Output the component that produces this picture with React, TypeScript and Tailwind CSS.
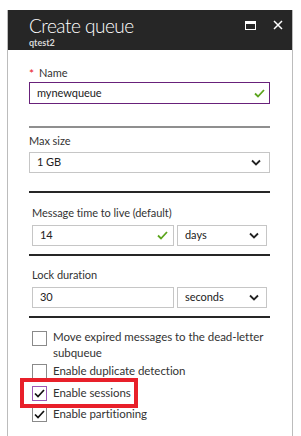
import React from 'react';

const font = { fontFamily: 'Lato, "Open Sans", Arial, sans-serif' };

function Chevron() {
    return (
        <svg width="10" height="7" viewBox="0 0 10 7" className="shrink-0">
            <polyline points="1,1.5 5,5.5 9,1.5" fill="none" stroke="#222" strokeWidth="1.8" />
        </svg>
    );
}

function GreenCheck() {
    return (
        <svg width="11" height="9" viewBox="0 0 11 9" className="shrink-0">
            <polyline points="1,4.5 4,7.5 10,1" fill="none" stroke="#5ca51d" strokeWidth="1.8" />
        </svg>
    );
}

function Box({ checked, focus }: { checked?: boolean; focus?: boolean }) {
    return (
        <div className={`w-[15px] h-[15px] shrink-0 border bg-white flex items-center justify-center ${focus ? 'border-[#9b59b6]' : 'border-[#8a8a8a]'}`}>
            {checked && (
                <svg width="11" height="9" viewBox="0 0 11 9">
                    <polyline points="1,4.5 4,7.5 10,1" fill="none" stroke="#111" strokeWidth="1.7" />
                </svg>
            )}
        </div>
    );
}

export default function App() {
    return (
        <div className="w-[301px] h-[436px] bg-white overflow-hidden pt-[10px] pl-[7px]" style={font}>
            <div className="w-[286px] h-[426px] border-x border-[#bcbcbc] relative">
                {/* Header */}
                <div className="h-[40px] bg-[#262626] flex items-start justify-between pl-[21px] pr-[9px]">
                    <div className="pt-[4px]">
                        <div className="text-[19px] leading-[23px] font-light tracking-[-0.5px] text-white">Create queue</div>
                        <div className="text-[9px] leading-[11px] text-[#d8d8d8] font-bold">qtest2</div>
                    </div>
                    <div className="flex items-center gap-[17px] pt-[10px]">
                        <div className="w-[11px] h-[9px] border-[1.5px] border-white border-t-[3px]"></div>
                        <svg width="10" height="10" viewBox="0 0 10 10">
                            <path d="M1 1 L9 9 M9 1 L1 9" stroke="white" strokeWidth="1.5" />
                        </svg>
                    </div>
                </div>

                {/* Body */}
                <div className="pl-[21px] pr-[22px] text-[11px] tracking-[-0.05px] text-[#333]">
                    <div className="pt-[15px] h-[32px] flex items-center">
                        <span className="text-[#e81123] mr-[5px] text-[12px]">*</span>
                        <span>Name</span>
                    </div>
                    <div className="h-[22px] border border-[#68217a] flex items-center justify-between pl-[7px] pr-[4px] text-[#222]">
                        <span>mynewqueue</span>
                        <GreenCheck />
                    </div>
                    <div className="mt-[22px] h-[2px] bg-[#8f8f8f]"></div>

                    <div className="h-[21px] mt-[3px] flex items-center">Max size</div>
                    <div className="h-[21px] border border-[#c6c6c6] flex items-center justify-between pl-[7px] pr-[8px] text-[#222]">
                        <span>1 GB</span>
                        <Chevron />
                    </div>
                    <div className="mt-[18px] h-[2px] bg-[#262626]"></div>

                    <div className="px-[3px]">
                        <div className="h-[23px] mt-[9px] flex items-center">Message time to live (default)</div>
                        <div className="flex gap-[3px]">
                            <div className="w-[142px] h-[21px] border border-[#c6c6c6] flex items-center justify-between pl-[7px] pr-[5px] text-[#222]">
                                <span>14</span>
                                <GreenCheck />
                            </div>
                            <div className="flex-1 h-[21px] border border-[#c6c6c6] flex items-center justify-between pl-[7px] pr-[7px] text-[#222]">
                                <span>days</span>
                                <Chevron />
                            </div>
                        </div>
                    </div>
                    <div className="mt-[8px] h-[2px] bg-[#262626]"></div>

                    <div className="px-[3px]">
                        <div className="h-[23px] mt-[8px] flex items-center">Lock duration</div>
                        <div className="flex gap-[3px]">
                            <div className="w-[142px] h-[21px] border border-[#c6c6c6] flex items-center pl-[7px] text-[#222]">
                                <span>30</span>
                            </div>
                            <div className="flex-1 h-[21px] border border-[#c6c6c6] flex items-center justify-between pl-[7px] pr-[7px] text-[#222]">
                                <span>seconds</span>
                                <Chevron />
                            </div>
                        </div>
                    </div>
                    <div className="mt-[8px] h-[2px] bg-[#262626]"></div>

                    {/* Checkboxes */}
                    <div className="pl-[3px] pt-[11px] flex flex-col leading-[16px] text-[11.5px]">
                        <div className="flex gap-[6px] items-start">
                            <div className="pt-[2px]"><Box /></div>
                            <span className="whitespace-nowrap">Move expired messages to the dead-letter<br />subqueue</span>
                        </div>
                        <div className="flex gap-[6px] items-center mt-[2px]">
                            <Box />
                            <span>Enable duplicate detection</span>
                        </div>
                        <div className="flex gap-[6px] items-center relative mt-[6px]">
                            <Box checked focus />
                            <span>Enable sessions</span>
                            <div className="absolute left-[-12px] top-[-7px] w-[118px] h-[30px] border-[4px] border-[#e8202a]"></div>
                        </div>
                        <div className="flex gap-[6px] items-center mt-[5px]">
                            <Box checked />
                            <span>Enable partitioning</span>
                        </div>
                    </div>
                </div>
            </div>
        </div>
    );
}
